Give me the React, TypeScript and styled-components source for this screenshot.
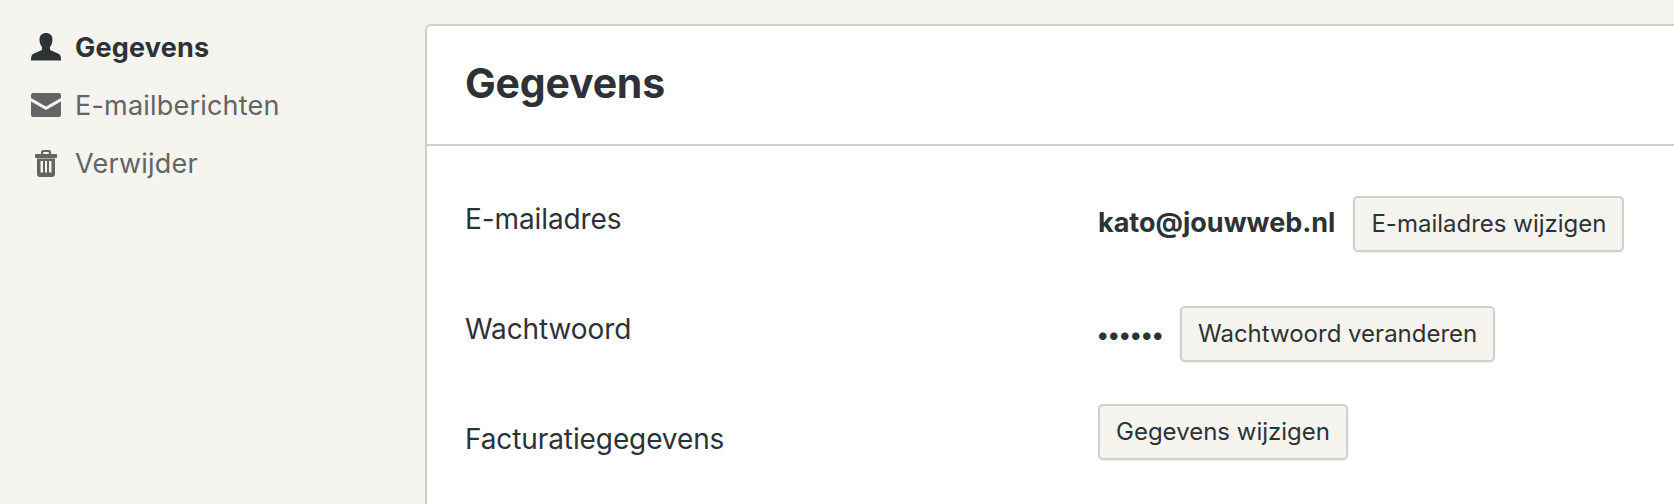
import React from "react";
import styled, { createGlobalStyle } from "styled-components";

const GlobalStyle = createGlobalStyle`
  html, body {
    margin: 0;
    height: 504px;
    overflow: hidden;
    background: #f5f4ef;
    font-family: "Inter", "Liberation Sans", sans-serif;
    color: #2d3236;
  }
`;

const UserIcon = () => (
  <svg width="30" height="28" viewBox="0 0 30 28" fill="currentColor">
    <path d="M15 0c4 0 6.500 2.500 6.500 6.500 0 3-1 5.500-2.500 7.500v2.500c0 1 5 2.500 8 4 2 1 3 2 3 7H0c0-5 1-6 3-7 3-1.500 8-3 8-4V14C9.500 12 8.500 9.500 8.500 6.500 8.500 2.500 11 0 15 0z" />
  </svg>
);

const MailIcon = () => (
  <svg width="30" height="24" viewBox="0 0 30 24" fill="currentColor">
    <path d="M2 0h26a2 2 0 0 1 2 2v3l-15 8.500L0 5V2a2 2 0 0 1 2-2z" />
    <path d="M0 8.500L15 17l15-8.500V22a2 2 0 0 1-2 2H2a2 2 0 0 1-2-2z" />
  </svg>
);

const TrashIcon = () => (
  <svg width="22" height="27" viewBox="0 0 22 27" fill="currentColor">
    <path
      d="M8 0h6a2 2 0 0 1 2 2v2h5a1 1 0 0 1 1 1v3H0V5a1 1 0 0 1 1-1h5V2a2 2 0 0 1 2-2zm.2 2v2h5.600V2z"
      fillRule="evenodd"
    />
    <path
      d="M2 8.500h18V24a3 3 0 0 1-3 3H5a3 3 0 0 1-3-3zM5.500 11v11.500H8V11zm4.500 0v11.500h2V11zm4 0v11.500h2.500V11z"
      fillRule="evenodd"
    />
  </svg>
);

const navItems = [
  { label: "Gegevens", icon: <UserIcon />, active: true },
  { label: "E-mailberichten", icon: <MailIcon />, active: false },
  { label: "Verwijder", icon: <TrashIcon />, active: false },
];

export default function App() {
  return (
    <>
      <GlobalStyle />
      <Page>
        <Sidebar>
          {navItems.map((item) => (
            <NavItem key={item.label} $active={item.active}>
              <NavIcon>{item.icon}</NavIcon>
              {item.label}
            </NavItem>
          ))}
        </Sidebar>
        <Panel>
          <PanelHeader>
            <Title>Gegevens</Title>
          </PanelHeader>
          <Rows>
            <Row>
              <Label>E-mailadres</Label>
              <Value $top={12}>
                <Email>kato@jouwweb.nl</Email>
                <Button>E-mailadres wijzigen</Button>
              </Value>
            </Row>
            <Row>
              <Label>Wachtwoord</Label>
              <Value $top={12}>
                <Dots>••••••</Dots>
                <Button>Wachtwoord veranderen</Button>
              </Value>
            </Row>
            <Row>
              <Label>Facturatiegegevens</Label>
              <Value $top={0}>
                <Button>Gegevens wijzigen</Button>
              </Value>
            </Row>
          </Rows>
        </Panel>
      </Page>
    </>
  );
}

const Page = styled.div`
  display: flex;
  height: 504px;
  overflow: hidden;
`;

const Sidebar = styled.nav`
  flex: 0 0 425px;
  box-sizing: border-box;
  padding: 18px 0 0 31px;
`;

const NavItem = styled.a<{ $active: boolean }>`
  display: flex;
  align-items: center;
  height: 58px;
  font-size: 27px;
  letter-spacing: 0.2px;
  font-weight: ${(p) => (p.$active ? 700 : 400)};
  color: ${(p) => (p.$active ? "#2d3236" : "#626466")};
`;

const NavIcon = styled.span`
  flex: 0 0 44px;
  display: flex;
  justify-content: center;
  padding-right: 14px;
  box-sizing: border-box;
`;

const Panel = styled.main`
  flex: 1;
  margin-top: 24px;
  background: #fff;
  border: 2px solid #d0cfca;
  border-right: 0;
  border-bottom: 0;
  border-top-left-radius: 6px;
`;

const PanelHeader = styled.header`
  height: 120px;
  box-sizing: border-box;
  padding: 0 0 4px 38px;
  display: flex;
  align-items: center;
  border-bottom: 2px solid #d0cfca;
`;

const Title = styled.h1`
  margin: 0;
  font-size: 41px;
  font-weight: 700;
  letter-spacing: -0.2px;
  color: #2d3236;
`;

const Rows = styled.div`
  padding-top: 38px;
`;

const Row = styled.div`
  display: grid;
  grid-template-columns: 633px 1fr;
  height: 110px;
  padding-left: 38px;
  box-sizing: border-box;
`;

const Label = styled.div`
  padding-top: 18px;
  font-size: 28px;
  letter-spacing: -0.1px;
  line-height: 34px;
`;

const Value = styled.div<{ $top: number }>`
  display: flex;
  align-items: center;
  gap: 18px;
  align-self: start;
  padding-top: ${(p) => p.$top}px;
`;

const Email = styled.strong`
  padding-bottom: 4px;
  font-size: 27px;
  font-weight: 700;
`;

const Dots = styled.span`
  margin-left: -2px;
  font-size: 24px;
  letter-spacing: -2.5px;
`;

const Button = styled.button`
  height: 56px;
  padding: 0 16px 2px;
  background: #f5f4ef;
  border: 2px solid #d0cfca;
  border-radius: 5px;
  box-shadow: 0 1px 2px rgba(0, 0, 0, 0.08);
  font-family: inherit;
  font-size: 24px;
  color: #2d3236;
`;
